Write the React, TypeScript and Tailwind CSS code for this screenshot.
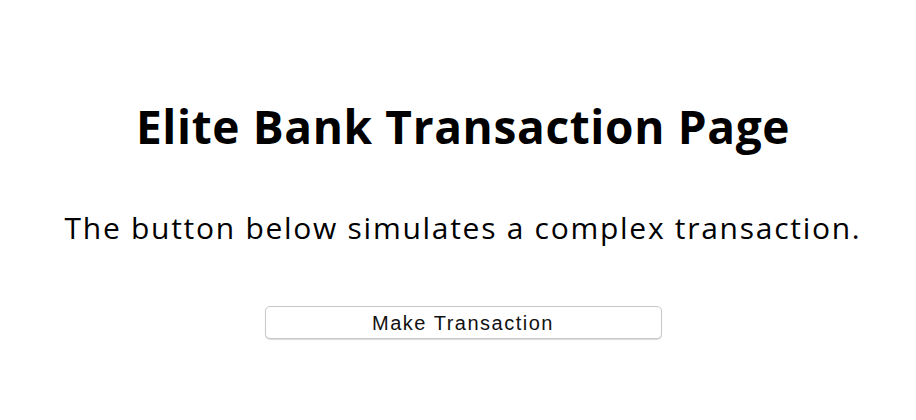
import React from 'react';

const App: React.FC = () => {
  return (
    <div className="min-h-[420px] w-full bg-white pl-[10px] text-black">
      <div className="flex flex-col items-center pt-[98px]">
        <h1 className="font-['Open_Sans',sans-serif] text-[46px] leading-[56px] font-bold tracking-[0.65px]">
          Elite Bank Transaction Page
        </h1>
        <p className="mt-[54px] font-['Open_Sans',sans-serif] text-[30px] leading-[40px] font-medium tracking-[1.72px]">
          The button below simulates a complex transaction.
        </p>
        <button
          type="button"
          className="mt-[58px] h-[33px] w-[397px] rounded-[5px] border border-[#c8c8c8] bg-white pt-[1px] font-['Liberation_Sans',sans-serif] text-[20px] tracking-[1.5px] text-[#111] shadow-[0_1px_1px_rgba(0,0,0,0.15)]"
        >
          Make Transaction
        </button>
      </div>
    </div>
  );
};

export default App;
